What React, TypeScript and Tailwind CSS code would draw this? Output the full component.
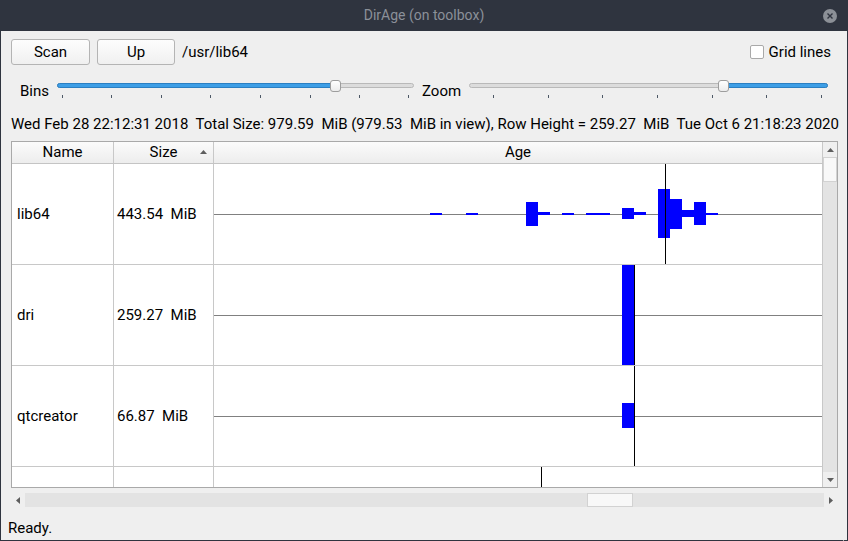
import React from 'react';

type Bar = [number, number, number, number];

interface RowData {
  name: string;
  size: string;
  bars: Bar[];
  mark: number;
  centre: boolean;
  height: number;
}

const rows: RowData[] = [
  {
    name: 'lib64',
    size: '443.54  MiB',
    bars: [
      [216, 49, 12, 2],
      [252, 49, 12, 2],
      [312, 38, 12, 24],
      [324, 48, 12, 3],
      [348, 49, 12, 2],
      [372, 49, 24, 2],
      [408, 44, 12, 11],
      [420, 48, 12, 3],
      [444, 25, 12, 49],
      [456, 35, 12, 30],
      [468, 46, 12, 7],
      [480, 38, 12, 23],
      [492, 49, 12, 2],
    ],
    mark: 451,
    centre: true,
    height: 100,
  },
  { name: 'dri', size: '259.27  MiB', bars: [[408, 0, 12, 100]], mark: 420, centre: true, height: 100 },
  { name: 'qtcreator', size: '66.87  MiB', bars: [[408, 37, 12, 25]], mark: 420, centre: true, height: 100 },
  { name: '', size: '', bars: [], mark: 327, centre: false, height: 20 },
];

// Qt-ish horizontal slider with tick marks underneath
const Slider: React.FC<{ width: number; handle: number; fillLeft: boolean; ticks: number[] }> = ({
  width,
  handle,
  fillLeft,
  ticks,
}) => (
  <div className="relative h-[22px] shrink-0" style={{ width }}>
    <div className="absolute left-0 right-0 top-[4px] h-[5px] rounded-full border border-[#b9b9b9] bg-[#dcdcdc]" />
    <div
      className="absolute top-[4px] h-[5px] rounded-full border border-[#2b7fc2] bg-[#3d9ee6]"
      style={fillLeft ? { left: 0, width: handle + 4 } : { left: handle + 6, right: 0 }}
    />
    <div
      className="absolute top-[1px] h-[12px] w-[11px] rounded-[3px] border border-[#9d9d9d] bg-gradient-to-b from-white to-[#ececec]"
      style={{ left: handle }}
    />
    {ticks.map((t) => (
      <div key={t} className="absolute top-[16px] h-[3px] w-px bg-[#4d5866]" style={{ left: t }} />
    ))}
  </div>
);

const Arrow: React.FC<{ dir: 'up' | 'down' | 'left' | 'right' }> = ({ dir }) => {
  const pts = {
    up: '0,4 3.5,0 7,4',
    down: '0,0 3.5,4 7,0',
    left: '4,0 0,3.5 4,7',
    right: '0,0 4,3.5 0,7',
  }[dir];
  const vertical = dir === 'up' || dir === 'down';
  return (
    <svg width={vertical ? 7 : 4} height={vertical ? 4 : 7}>
      <polygon points={pts} fill="#5e5e5e" />
    </svg>
  );
};

const AgeChart: React.FC<{ row: RowData }> = ({ row }) => (
  <svg width={608} height={row.height} className="block">
    {row.centre && <rect x={0} y={50} width={608} height={1} fill="#808080" />}
    {row.bars.map(([x, y, w, h], i) => (
      <rect key={i} x={x} y={y} width={w} height={h} fill="#0000ff" />
    ))}
    <rect x={row.mark} y={0} width={1} height={row.height} fill="#000" />
  </svg>
);

export default function App() {
  return (
    <div className="flex h-[541px] w-[848px] flex-col overflow-hidden bg-[#2f343f] px-px pb-px font-['Roboto',sans-serif] text-[15px] text-black">
      {/* Title bar */}
      <div className="relative flex h-[31px] shrink-0 items-center justify-center">
        <span className="text-[14px] text-[#8b9099]">DirAge (on toolbox)</span>
        <div className="absolute right-[10px] top-[9px] flex h-[14px] w-[14px] items-center justify-center rounded-full bg-[#8c9097]">
          <svg width="6" height="6" viewBox="0 0 6 6">
            <path d="M0.5 0.5 L5.5 5.5 M5.5 0.5 L0.5 5.5" stroke="#2f343f" strokeWidth="1.4" />
          </svg>
        </div>
      </div>

      <div className="flex flex-1 flex-col bg-[#efefef]">
        {/* Toolbar */}
        <div className="mt-[8px] flex h-[26px] items-center pl-[10px] pr-[16px]">
          <button className="h-[26px] w-[79px] rounded-[3px] border border-[#b4b4b4] bg-gradient-to-b from-[#fdfdfd] to-[#f0f0f0]">
            Scan
          </button>
          <button className="ml-[7px] h-[26px] w-[78px] rounded-[3px] border border-[#b4b4b4] bg-gradient-to-b from-[#fdfdfd] to-[#f0f0f0]">
            Up
          </button>
          <span className="ml-[7px]">/usr/lib64</span>
          <div className="ml-auto flex items-center">
            <div className="h-[14px] w-[14px] rounded-[2px] border border-[#a9a9a9] bg-white" />
            <span className="ml-[5px]">Grid lines</span>
          </div>
        </div>

        {/* Sliders */}
        <div className="mt-[14px] flex h-[22px] items-center pl-[19px]">
          <span className="w-[37px] shrink-0 pt-[2px]">Bins</span>
          <Slider width={357} handle={273} fillLeft ticks={[5, 54, 104, 153, 203, 253, 302, 351]} />
          <span className="ml-[8px] w-[47px] shrink-0 pt-[2px]">Zoom</span>
          <Slider width={359} handle={249} fillLeft={false} ticks={[24, 79, 133, 188, 243, 297, 352]} />
        </div>

        {/* Info line */}
        <div className="mt-[15px] h-[17px] whitespace-pre pl-[10px] leading-[17px]">
          Wed Feb 28 22:12:31 2018  Total Size: 979.59  MiB (979.53  MiB in view), Row Height = 259.27  MiB  Tue Oct 6 21:18:23 2020
        </div>

        {/* Table */}
        <div className="ml-[10px] mt-[8px] flex h-[347px] w-[827px] border border-[#a9a9a9] bg-white">
          <div className="flex w-[811px] flex-col overflow-hidden">
            <div className="flex h-[22px] shrink-0 border-b border-[#c4c4c4] bg-gradient-to-b from-[#fbfbfb] to-[#ededed]">
              <div className="flex w-[102px] items-center justify-center border-r border-[#c8c8c8]">Name</div>
              <div className="relative flex w-[100px] items-center justify-center border-r border-[#c8c8c8]">
                Size
                <div className="absolute right-[6px] top-[8px]">
                  <Arrow dir="up" />
                </div>
              </div>
              <div className="flex flex-1 items-center justify-center border-r border-[#c8c8c8]">Age</div>
            </div>
            {rows.map((row, i) => (
              <div
                key={i}
                className="flex shrink-0 border-b border-[#c8c8c8]"
                style={{ height: row.height + 1 }}
              >
                <div className="flex w-[102px] items-center whitespace-pre border-r border-[#c8c8c8] pl-[5px]">
                  {row.name}
                </div>
                <div className="flex w-[100px] items-center whitespace-pre border-r border-[#c8c8c8] pl-[3px]">
                  {row.size}
                </div>
                <div className="flex-1 border-r border-[#c8c8c8]">
                  <AgeChart row={row} />
                </div>
              </div>
            ))}
          </div>
          {/* Vertical scrollbar */}
          <div className="flex w-[14px] flex-col bg-[#e3e3e3]">
            <div className="flex h-[15px] items-center justify-center bg-[#efefef]">
              <Arrow dir="up" />
            </div>
            <div className="h-[25px] border border-[#d2d2d2] bg-[#f8f8f8]" />
            <div className="flex-1" />
            <div className="flex h-[15px] items-center justify-center bg-[#efefef]">
              <Arrow dir="down" />
            </div>
          </div>
        </div>

        {/* Horizontal scrollbar */}
        <div className="ml-[10px] mt-[5px] flex h-[14px] w-[827px] bg-[#e3e3e3]">
          <div className="flex w-[14px] items-center justify-center bg-[#efefef]">
            <Arrow dir="left" />
          </div>
          <div className="w-[562px]" />
          <div className="w-[46px] border border-[#d2d2d2] bg-[#f8f8f8]" />
          <div className="flex-1" />
          <div className="flex w-[14px] items-center justify-center bg-[#efefef]">
            <Arrow dir="right" />
          </div>
        </div>

        {/* Status bar */}
        <div className="relative mt-[13px] flex h-[16px] items-center pl-[7px]">
          Ready.
          <svg className="absolute bottom-[-12px] right-[2px]" width="8" height="8">
            <rect x="6" y="0" width="1" height="1" fill="#b0b0b0" />
            <rect x="3" y="3" width="1" height="1" fill="#b0b0b0" />
            <rect x="6" y="3" width="1" height="1" fill="#b0b0b0" />
            <rect x="0" y="6" width="1" height="1" fill="#b0b0b0" />
            <rect x="3" y="6" width="1" height="1" fill="#b0b0b0" />
            <rect x="6" y="6" width="1" height="1" fill="#b0b0b0" />
          </svg>
        </div>
      </div>
    </div>
  );
}
